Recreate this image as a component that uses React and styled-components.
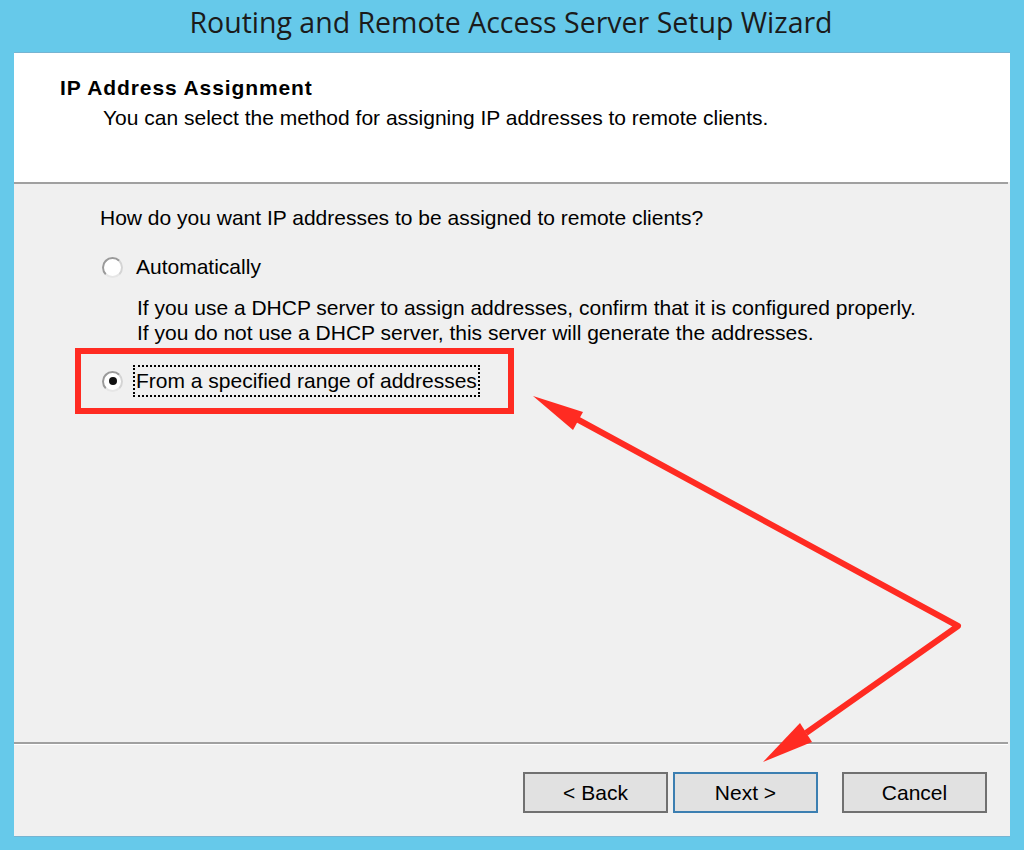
import React from 'react'
import styled, { createGlobalStyle } from 'styled-components'

const GlobalStyle = createGlobalStyle`
  html, body {
    margin: 0;
    padding: 0;
    background: #66c9ea;
  }
`

const Window = styled.div`
  position: relative;
  width: 1024px;
  height: 850px;
  background: #66c9ea;
  display: flex;
  flex-direction: column;
  overflow: hidden;
`

const TitleBar = styled.div`
  height: 52px;
  display: flex;
  align-items: center;
  justify-content: center;
  font-family: 'Open Sans', 'Noto Sans', sans-serif;
  font-size: 28.5px;
  color: #1b1b1b;
  padding: 0 2px 9px 0;
  box-sizing: border-box;
`

const Client = styled.div`
  flex: 1;
  margin: 0 14px 14px 14px;
  display: flex;
  flex-direction: column;
  background: #f0f0f0;
  border-top: 1px solid #76b4d2;
  box-shadow: 0 1px 0 #76b4d2;
  font-family: 'Liberation Sans', Arial, sans-serif;
  color: #000;
`

const Header = styled.div`
  height: 129px;
  background: #fff;
  padding: 23px 0 0 46px;
  box-sizing: border-box;
`

const HeaderTitle = styled.div`
  font-weight: bold;
  font-size: 21px;
  letter-spacing: 0.9px;
  line-height: 24px;
`

const HeaderSub = styled.div`
  font-size: 21px;
  line-height: 24px;
  margin: 6px 0 0 43px;
`

const Rule = styled.div`
  height: 2px;
  margin-right: 2px;
  background: #a0a0a0;
  border-bottom: ${p => (p.$light ? '1px solid #fff' : 'none')};
`

const Body = styled.div`
  flex: 1;
  padding: 22px 0 0 86px;
  font-size: 21px;
  line-height: 24px;
`

const Question = styled.div`
  margin-bottom: 22px;
`

const OptionRow = styled.label`
  display: flex;
  align-items: center;
  gap: 12px;
  margin-left: 3px;
  height: 30px;
`

const Radio = styled.span`
  width: 21px;
  height: 21px;
  box-sizing: border-box;
  border-radius: 50%;
  border: 2px solid #9a9a9a;
  border-right-color: #d4d4d4;
  border-bottom-color: #e6e6e6;
  background: #fff;
  display: flex;
  align-items: center;
  justify-content: center;
  flex-shrink: 0;
  margin-left: -1px;

  &::after {
    content: '';
    width: 8px;
    height: 8px;
    border-radius: 50%;
    background: ${p => (p.$checked ? '#111' : 'transparent')};
  }
`

const OptionLabel = styled.span`
  padding: 2px 1px;
  outline: ${p => (p.$focus ? '2px dotted #000' : 'none')};
  outline-offset: 0;
`

const Description = styled.div`
  margin: 13px 0 21px 37px;
  line-height: 25px;
`

const Footer = styled.div`
  height: 91px;
  display: flex;
  justify-content: flex-end;
  align-items: flex-start;
  padding: 27px 23px 0 0;
  box-sizing: border-box;
`

const Button = styled.button`
  width: 145px;
  height: 41px;
  box-sizing: border-box;
  background: #e1e1e1;
  border: 2px solid ${p => (p.$default ? '#3c7fb1' : '#707070')};
  font-family: 'Liberation Sans', Arial, sans-serif;
  font-size: 21px;
  color: #000;
  padding: 0;
  margin-left: ${p => p.$gap || 0}px;
`

const Highlight = styled.div`
  position: absolute;
  left: 75px;
  top: 348px;
  width: 439px;
  height: 66px;
  box-sizing: border-box;
  border: 6px solid #ff2b22;
  pointer-events: none;
`

const Annotation = styled.svg`
  position: absolute;
  left: 0;
  top: 0;
  pointer-events: none;
`

export default function App() {
  return (
    <Window>
      <GlobalStyle />
      <TitleBar>Routing and Remote Access Server Setup Wizard</TitleBar>
      <Client>
        <Header>
          <HeaderTitle>IP Address Assignment</HeaderTitle>
          <HeaderSub>You can select the method for assigning IP addresses to remote clients.</HeaderSub>
        </Header>
        <Rule />
        <Body>
          <Question>How do you want IP addresses to be assigned to remote clients?</Question>
          <OptionRow>
            <Radio />
            <OptionLabel>Automatically</OptionLabel>
          </OptionRow>
          <Description>
            If you use a DHCP server to assign addresses, confirm that it is configured properly.
            <br />
            If you do not use a DHCP server, this server will generate the addresses.
          </Description>
          <OptionRow>
            <Radio $checked />
            <OptionLabel $focus>From a specified range of addresses</OptionLabel>
          </OptionRow>
        </Body>
        <Rule $light />
        <Footer>
          <Button>&lt; Back</Button>
          <Button $default $gap={5}>Next &gt;</Button>
          <Button $gap={24}>Cancel</Button>
        </Footer>
      </Client>

      <Highlight />
      <Annotation width="1024" height="850" viewBox="0 0 1024 850">
        <polyline
          points="575,418 958,626 806,733"
          fill="none"
          stroke="#ff2b22"
          strokeWidth="6"
          strokeLinejoin="round"
        />
        <polygon points="533,396 583,412 573,430" fill="#ff2b22" />
        <polygon points="763,762 800,723 812,742" fill="#ff2b22" />
      </Annotation>
    </Window>
  )
}
